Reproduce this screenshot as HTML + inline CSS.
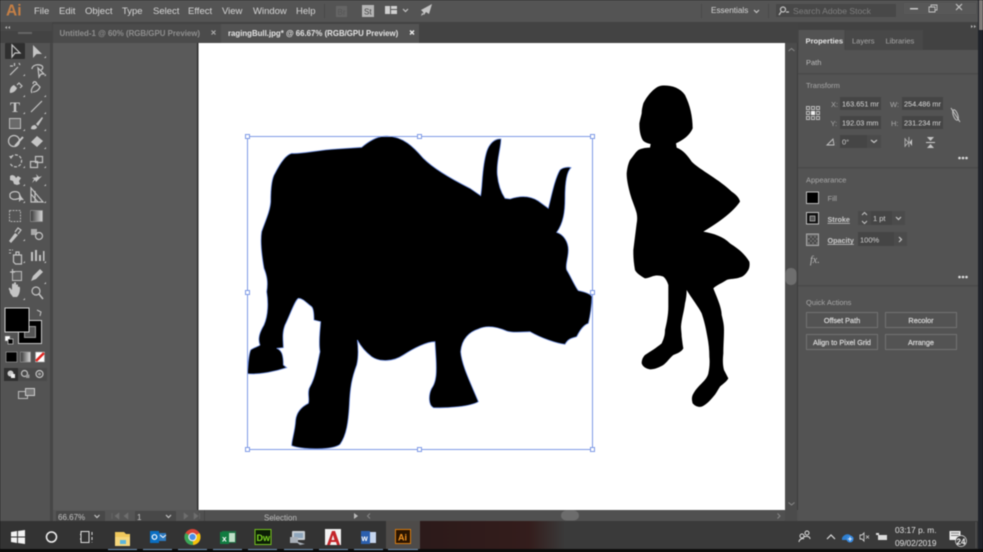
<!DOCTYPE html>
<html><head><meta charset="utf-8">
<style>
html,body{margin:0;padding:0;width:983px;height:552px;overflow:hidden;background:#111}
svg{display:block;position:absolute;left:0;top:0;filter:blur(.5px)}
text{font-family:"Liberation Sans",sans-serif;font-size:9px;fill:#d0d0d0}
.m{font-size:9.5px;fill:#d6d6d6}
.i{fill:none;stroke:#c4c4c4;stroke-width:1.2}
.f{fill:#c4c4c4}
.dim{fill:#a8a8a8}
.b{font-weight:bold}
</style></head><body>
<svg width="983" height="552" viewBox="0 0 983 552" xmlns="http://www.w3.org/2000/svg">
<defs>
<linearGradient id="tb" x1="0" x2="1" y1="0" y2="0"><stop offset="0" stop-color="#2c1a1a"/><stop offset=".75" stop-color="#341d1c"/><stop offset="1" stop-color="#3a3a3a"/></linearGradient>
<linearGradient id="gr" x1="0" x2="1" y1="0" y2="0"><stop offset="0" stop-color="#333"/><stop offset="1" stop-color="#ddd"/></linearGradient>
</defs>
<!-- base -->
<rect width="983" height="552" fill="#535353"/>
<!-- menu bar -->
<rect width="978" height="22" fill="#545454"/>
<text x="6" y="15.5" style="font-size:15.5px;font-weight:bold;fill:#c57f45">Ai</text>
<text class="m" x="34" y="14">File</text><text class="m" x="59" y="14">Edit</text><text class="m" x="85" y="14">Object</text><text class="m" x="122" y="14">Type</text><text class="m" x="153" y="14">Select</text><text class="m" x="188" y="14">Effect</text><text class="m" x="222" y="14">View</text><text class="m" x="253" y="14">Window</text><text class="m" x="296" y="14">Help</text>
<rect x="324" y="4" width="1" height="14" fill="#484848"/>
<rect x="336" y="6" width="11" height="11" fill="#656565"/><text x="337.5" y="15" style="font-size:8px;fill:#555">Br</text>
<rect x="362" y="5" width="12" height="12" fill="#b5b5b5"/><text x="364" y="14.5" style="font-size:8px;fill:#444">St</text>
<rect x="385" y="6" width="5" height="8" fill="#d0d0d0"/><rect x="391" y="6" width="6" height="3" fill="#d0d0d0"/><rect x="391" y="10" width="6" height="4" fill="#d0d0d0"/>
<path class="i" d="M403 9l2.5 2.5 2.5-2.500"/>
<path class="f" d="M421 10l11-6-3 10-3-2-2 3-1-3zM424 14l-3 2 1-3z"/>
<rect x="701" y="4" width="1" height="14" fill="#4a4a4a"/>
<text x="711" y="13" style="font-size:8.2px;fill:#d6d6d6">Essentials</text>
<path class="i" d="M754 10l2.5 2.5 2.5-2.500"/>
<rect x="768" y="4" width="1" height="14" fill="#4a4a4a"/>
<rect x="776" y="4" width="120" height="13" fill="#484848"/>
<circle cx="783" cy="9.5" r="2.500" class="i"/><path class="i" d="M781 12l-2 3M786 12h3"/>
<text x="793" y="14" style="font-size:8.6px;fill:#7e7e7e">Search Adobe Stock</text>
<rect x="904" y="3" width="72" height="11" fill="#585858"/>
<rect x="910" y="8" width="8" height="1.5" fill="#c8c8c8"/>
<path class="i" style="stroke-width:.9" d="M929 7h6v5h-6zM931 7V5h6v5h-2"/>
<path class="i" d="M956 4l6 6M962 4l-6 6"/>
<!-- desktop sliver -->
<rect x="978" y="0" width="5" height="552" fill="#1f2229"/>
<rect x="979" y="0" width="4" height="30" fill="#7f7a78"/>
<!-- tab bar -->
<rect y="22" width="978" height="21" fill="#434343"/>
<rect x="0" y="22" width="52" height="9" fill="#484848"/>
<path d="M7 26l-2 1.5 2 1.500zM10 26l-2 1.5 2 1.500z" fill="#bbb"/>
<rect x="53" y="24" width="168" height="19" fill="#4b4b4b"/>
<rect x="221" y="24" width="198" height="19" fill="#535353"/>
<text x="59.5" y="36" class="b" style="font-size:7.9px;fill:#8f8f8f">Untitled-1 @ 60% (RGB/GPU Preview)</text>
<path d="M211.5 30.5l4 4M215.5 30.5l-4 4" stroke="#aaa" stroke-width="1.2"/>
<text x="228" y="36" class="b" style="font-size:7.85px;fill:#e4e4e4">ragingBull.jpg* @ 66.67% (RGB/GPU Preview)</text>
<path d="M410 30.5l4 4M414 30.5l-4 4" stroke="#eee" stroke-width="1.3"/>
<!-- canvas -->
<rect x="50" y="43" width="3" height="478" fill="#464646"/>
<rect x="53" y="43" width="145" height="467" fill="#5a5a5a"/>
<rect x="197" y="43" width="1.5" height="467" fill="#2e2e2e"/>
<rect x="198.5" y="43" width="586.5" height="467" fill="#fff"/>
<!-- v scrollbar -->
<rect x="785" y="43" width="12" height="467" fill="#4b4b4b"/>
<rect x="785.5" y="268" width="11" height="17" rx="5" fill="#6e6e6e"/>
<path d="M788.5 51l3-2.5 3 2.500M788.5 502.5l3 2.5 3-2.500" fill="none" stroke="#888" stroke-width="1"/>
<rect x="797" y="43" width="1.5" height="478" fill="#3d3d3d"/>
<!-- bottom status -->
<rect x="53" y="510" width="745" height="11" fill="#505050"/>
<rect x="53" y="510" width="145" height="11" fill="#555"/>
<rect x="56" y="511" width="35" height="10" fill="#484848"/><text x="58" y="520" style="font-size:8px;fill:#c2c2c2">66.67%</text>
<rect x="91" y="511" width="14" height="10" fill="#484848"/><path class="i" d="M94.5 515l2.5 2.5 2.5-2.500"/>
<path d="M112 513v6M119 513l-4 3 4 3zM128 513l-4 3 4 3z" fill="#6e6e6e" stroke="#6e6e6e" stroke-width=".6"/>
<rect x="135" y="511" width="28" height="10" fill="#484848"/><text x="137" y="520" style="font-size:8px;fill:#c8c8c8">1</text>
<rect x="163" y="511" width="13" height="10" fill="#484848"/><path class="i" d="M166 515l2.5 2.5 2.5-2.500"/>
<path d="M184 513l4 3-4 3zM194 513l4 3-4 3zM199.5 513v6" fill="#6e6e6e" stroke="#6e6e6e" stroke-width=".6"/>
<rect x="204" y="510" width="1" height="11" fill="#444"/>
<text x="264" y="520.5" style="font-size:8px;fill:#bdbdbd">Selection</text>
<path d="M354 513l4 3-4 3z" fill="#bbb"/><path d="M370 513.5l-2.5 2.5 2.5 2.500" fill="none" stroke="#888"/>
<rect x="561" y="510.5" width="18" height="10" rx="5" fill="#6c6c6c"/>
<path d="M777.5 513.5l2.5 2.5-2.5 2.500" fill="none" stroke="#888"/>
<rect x="785" y="510" width="12" height="11" fill="#4b4b4b"/>
<!-- artwork: bull -->
<g transform="translate(240 125) scale(.33333)">
<path fill="#000" stroke="#6f8fe0" stroke-width="2.4" d="M365 67C385 50 410 33 440 33C490 35 520 65 550 100C585 135 650 170 690 190L722 212C728 180 725 130 740 80C748 55 765 40 783 42C783 70 768 110 772 150C775 180 785 205 795 220L810 222C840 212 870 212 895 228L925 250C935 210 945 160 960 135C968 127 985 125 993 128C980 140 975 170 975 220C975 260 970 295 950 322C970 328 985 350 985 375C985 400 975 420 980 435C990 450 1005 485 1015 497C1030 500 1050 505 1056 515C1055 540 1050 575 1045 595C1030 600 1020 615 1010 635C995 640 985 640 975 658C950 655 905 640 870 620C850 620 820 625 800 618C770 605 740 600 715 612C690 620 665 640 662 680C665 720 690 770 715 830C690 845 620 850 580 848C565 840 565 810 575 790C590 770 590 740 588 700L585 650C560 650 520 670 490 690C460 710 420 712 395 695C375 680 360 660 352 645C355 670 355 700 350 720C335 760 330 790 328 840C325 890 320 930 300 958C280 975 190 975 155 962C155 945 165 920 167 885C170 860 185 845 205 835C210 825 200 800 210 785C225 760 232 720 240 680C235 650 240 620 242 590L222 585C222 565 220 550 215 545C200 535 190 520 175 520C165 525 150 570 135 600C125 625 130 650 130 668L110 670C125 675 130 690 130 720L140 728C110 738 60 750 22 746C25 720 25 690 32 675C40 668 55 665 60 660C52 640 60 620 72 600C85 570 85 530 80 500C85 470 80 450 72 430C65 390 60 350 65 320C75 290 90 260 92 230C92 190 95 160 105 145C115 125 135 90 155 85C185 88 230 75 290 72C320 70 350 68 365 67Z"/>
</g>
<rect x="247.5" y="136.5" width="345" height="313" fill="none" stroke="#7e9ae6" stroke-width="1"/>
<g fill="#fff" stroke="#7e9ae6" stroke-width="1">
<rect x="245.5" y="134.5" width="4" height="4"/><rect x="417.5" y="134.5" width="4" height="4"/><rect x="590.5" y="134.5" width="4" height="4"/>
<rect x="245.5" y="290.5" width="4" height="4"/><rect x="590.5" y="290.5" width="4" height="4"/>
<rect x="245.5" y="447.5" width="4" height="4"/><rect x="417.5" y="447.5" width="4" height="4"/><rect x="590.5" y="447.5" width="4" height="4"/>
</g>
<!-- artwork: girl -->
<g transform="translate(620 80) scale(.33333)">
<path fill="#000" d="M125 17C150 15 180 22 195 45C210 75 218 110 218 145C210 165 190 180 168 190L170 203C190 210 205 230 215 245C240 270 300 300 335 335C350 345 358 355 360 365C340 395 300 425 250 455C280 460 310 470 330 490C345 500 370 515 388 545C390 555 388 565 385 570C378 582 370 590 360 592C345 598 330 595 320 600C305 610 290 615 280 625L290 650C298 670 305 690 305 705C310 725 312 735 312 750C312 775 310 795 310 820C308 840 308 855 312 870L325 895C320 905 308 912 300 920C292 932 288 942 280 950C270 962 258 975 245 980C235 982 225 978 218 970C215 960 215 952 218 945C225 930 235 920 245 910C255 900 262 892 265 880C268 865 270 850 268 830C268 810 266 790 262 770C258 745 252 720 245 700C235 680 215 655 200 630C200 645 198 658 195 670C192 695 185 715 183 740C183 750 185 760 185 770C187 785 188 795 190 805C185 815 172 820 160 825C148 835 140 848 130 855C118 862 105 868 90 868C78 866 68 860 65 850C65 838 70 830 75 825C90 815 110 803 125 790C132 775 135 765 135 750C140 730 145 705 145 680L145 615C142 605 137 596 130 590C118 585 108 586 100 588C90 592 82 595 75 595C62 588 50 580 45 570C42 553 40 535 40 520L40 510L50 430C52 420 52 410 50 400C45 380 35 360 30 340C25 320 20 300 20 280C22 262 25 250 30 240C40 228 45 218 55 210C68 204 80 203 90 203L92 192C82 190 72 186 68 180C60 165 58 148 58 130C60 118 63 110 65 100C65 88 68 78 70 70C78 55 85 45 95 35C105 25 115 18 125 17Z"/>
</g>
<!-- toolbar -->
<rect x="1" y="31" width="49" height="1" fill="#444"/>
<rect x="18" y="32" width="14" height="2" fill="#666"/>
<rect x="5" y="43" width="20" height="16" rx="1" fill="#2f2f2f"/>
<g class="tools">
<path class="i" d="M12 45l0 12 3-4h5z"/>
<path class="f" d="M33 45v13l3.5-4H42z"/>
<path class="i" d="M10 75l8-8M14.5 63v3M10 66h3M19 63l1 2"/>
<path class="i" d="M32 69c0-3 4-5 8-4s3 4 1 5M38 68l1 9 2-3 3 0z"/>
<path class="f" d="M10 93c-1-3 1-7 4-8l3 3c-1 3-4 5-7 5z"/>
<path class="i" d="M17 85l2-2 3 3-2 2"/>
<path class="i" d="M32 93c-2-3 1-8 5-9l3 3c-1 3-4 5-7 5M37 84c-1-3-4-3-4 0"/>
<text x="10" y="112" style="font-family:'Liberation Serif',serif;font-size:15px;font-weight:bold;fill:#c8c8c8">T</text>
<path class="i" d="M31 112l11-11"/>
<rect x="9.5" y="118.5" width="11" height="10" fill="#6a6a6a" stroke="#bdbdbd"/>
<path class="f" d="M31 129c0-3 2-4 4-4l2 2c0 2-3 3-6 2zM36 124l6-7 1 1-5 8z"/>
<circle cx="14" cy="141" r="5.5" class="i"/><path d="M15 146l8-9" stroke="#c8c8c8" stroke-width="2"/>
<path class="f" d="M31 142l6-6 6 5-6 6z"/>
<path class="i" stroke-dasharray="3 1.5" d="M11 157a6 6 0 1 1-1 6"/><path class="f" d="M9 156h4l-2 3z"/>
<rect x="30.5" y="161.5" width="7" height="6" class="i"/><rect x="35.5" y="156.5" width="7" height="6" class="i"/>
<path class="f" d="M10 176c3-2 5 0 6 2l2-2 3 2-2 3 1 3-3 1-3-1-1-3-3-1z"/>
<path class="f" d="M36 174l3 3 3-1-6 6-1-2-3 3 2-4-2-1 5-1z"/>
<path class="i" d="M10 194c2-3 7-3 9-1l2 5-4 1c-3 1-6 0-7-2z"/><path class="f" d="M19 194v8l2-2 3 0z"/>
<path class="i" d="M31 188l0 14h12zM31 194l7 8M35 191v11"/>
<rect x="9.5" y="210.5" width="11" height="11" fill="#555" stroke="#b0b0b0" stroke-dasharray="2 1"/>
<rect x="30.5" y="210.5" width="12" height="11" fill="url(#gr)" stroke="#999" stroke-width=".6"/>
<path class="f" d="M9 241l6-8 3 2-7 8z"/><path class="i" d="M15 232l3-4 3 2-3 4"/>
<rect x="31" y="229" width="6" height="6" fill="#aaa"/><circle cx="39" cy="236" r="3.5" class="i"/>
<path class="i" d="M13.5 255h8v9h-6l-2-2zM16 252h3v3h-3z"/><path d="M9 250h2M9 253h2M12 250h1" stroke="#bbb"/>
<path class="f" d="M31 261v-9h2v9zM35 261v-11h2v11zM39 261v-6h2v6zM43 261v-10h1.5v10z"/>
<rect x="12.5" y="271.5" width="9" height="9" fill="#606060" stroke="#bbb"/><path class="i" d="M10 272h5M12.5 269v5"/>
<path class="f" d="M31 281l2-5 7-7 3 3-7 7z"/>
<path class="f" d="M10 293c0-3-2-4-1-5s2 1 3 2v-5c0-2 2-2 2 0v-2c0-1 2-1 2 0v2c1-1 2-1 2 1v1c1-1 2 0 2 1 0 4-1 7-3 9h-4z"/>
<circle cx="36" cy="291" r="4" class="i"/><path d="M39 294l4 5" stroke="#c4c4c4" stroke-width="1.5"/>
<!-- small corner triangles -->
<g fill="#c4c4c4">
<path d="M46 58v-2l-2 2zM25 76v-2l-2 2zM46 76v-2l-2 2zM25 97v-2l-2 2zM46 97v-2l-2 2zM25 114v-2l-2 2zM46 114v-2l-2 2zM25 131v-2l-2 2zM46 131v-2l-2 2zM25 149v-2l-2 2zM46 149v-2l-2 2zM25 168v-2l-2 2zM46 168v-2l-2 2zM25 186v-2l-2 2zM46 186v-2l-2 2zM25 203v-2l-2 2zM46 203v-2l-2 2zM25 241v-2l-2 2zM25 263v-2l-2 2zM46 263v-2l-2 2zM46 284v-2l-2 2zM25 300v-2l-2 2z"/>
</g>
</g>
<!-- swatches -->
<rect x="18.5" y="320.5" width="23" height="23" fill="#000" stroke="#c8c8c8"/>
<rect x="24.5" y="326.5" width="11" height="11" fill="#555" stroke="#999"/>
<rect x="5" y="308" width="24" height="24" fill="#000" stroke="#d0d0d0"/>
<path class="i" d="M37 310l4 2-1 4M36 310v0" style="stroke-width:1"/>
<rect x="5" y="336" width="5" height="5" fill="#fff" stroke="#777" stroke-width=".5"/><rect x="8" y="339" width="5" height="5" fill="#000" stroke="#ccc" stroke-width=".7"/>
<rect x="6" y="352" width="11" height="10" fill="#000" stroke="#aaa" stroke-width=".6"/>
<rect x="20.5" y="352" width="10" height="10" fill="url(#gr)" stroke="#999" stroke-width=".6"/>
<rect x="35.5" y="352" width="9" height="10" fill="#fff" stroke="#999" stroke-width=".6"/><path d="M36 361l8-8" stroke="#e0241f" stroke-width="2.5"/>
<rect x="4" y="368" width="14" height="13" fill="#2f2f2f"/>
<rect x="18" y="368" width="29" height="13" fill="#4a4a4a"/>
<circle cx="10.5" cy="373.5" r="3" fill="#ccc"/><rect x="11" y="374" width="4" height="4" fill="#eee"/>
<circle cx="24.5" cy="373.5" r="3" class="i"/><rect x="26" y="374.5" width="3.5" height="3.5" fill="#999"/>
<circle cx="39.5" cy="374" r="3.5" class="i"/><circle cx="39.5" cy="374" r="1.5" fill="#999"/>
<rect x="18.5" y="391.5" width="9" height="7" fill="#555" stroke="#bbb"/><rect x="25.5" y="388.5" width="9" height="7" fill="#777" stroke="#ccc"/>
<!-- right panel -->
<rect x="798" y="22" width="180" height="8" fill="#424242"/>
<path d="M971 25l2 1.5-2 1.500zM974 25l2 1.5-2 1.500z" fill="#bbb"/>
<rect x="798" y="30" width="180" height="20" fill="#424242"/>
<rect x="798.5" y="30" width="46" height="20" fill="#535353"/>
<rect x="845" y="30" width="78" height="20" fill="#484848"/>
<rect x="798" y="50" width="180" height="471" fill="#535353"/>
<text x="805.5" y="43.5" class="b" style="font-size:7.6px;fill:#e6e6e6">Properties</text>
<text x="852" y="43.5" class="dim" style="font-size:7.5px">Layers</text>
<text x="885.5" y="43.5" class="dim" style="font-size:7.5px">Libraries</text>
<text x="806" y="65" class="dim" style="font-size:7.5px;fill:#bbb">Path</text>
<rect x="798" y="73" width="180" height="1.5" fill="#4a4a4a"/>
<text x="806" y="88" class="dim" style="font-size:7.5px">Transform</text>
<g fill="none" stroke="#c8c8c8" stroke-width=".9">
<rect x="806.5" y="106.5" width="3" height="3"/><rect x="811.5" y="106.5" width="3" height="3"/><rect x="816.5" y="106.5" width="3" height="3"/>
<rect x="806.5" y="111.5" width="3" height="3"/><rect x="816.5" y="111.5" width="3" height="3"/>
<rect x="806.5" y="116.5" width="3" height="3"/><rect x="811.5" y="116.5" width="3" height="3"/><rect x="816.5" y="116.5" width="3" height="3"/>
</g><rect x="811" y="111" width="4" height="4" fill="#eee"/>
<text x="831" y="107" class="dim" style="font-size:7.5px">X:</text>
<rect x="840" y="97" width="41" height="13" fill="#454545"/><text x="842" y="106.5" style="font-size:7.3px;fill:#dcdcdc">163.651 mr</text>
<text x="830.5" y="126" class="dim" style="font-size:7.5px">Y:</text>
<rect x="840" y="116" width="41" height="13" fill="#454545"/><text x="842" y="125.5" style="font-size:7.3px;fill:#dcdcdc">192.03 mm</text>
<text x="890" y="107" class="dim" style="font-size:7.5px">W:</text>
<rect x="902" y="97" width="41" height="13" fill="#454545"/><text x="904" y="106.5" style="font-size:7.3px;fill:#dcdcdc">254.486 mr</text>
<text x="891" y="126" class="dim" style="font-size:7.5px">H:</text>
<rect x="902" y="116" width="41" height="13" fill="#454545"/><text x="904" y="125.5" style="font-size:7.3px;fill:#dcdcdc">231.234 mr</text>
<path d="M951 108l9 14" stroke="#c4c4c4" stroke-width="1"/><ellipse cx="955.5" cy="115" rx="2.2" ry="5.5" class="i" style="stroke-width:1" transform="rotate(-20 955.5 115)"/>
<path class="i" style="stroke-width:.9" d="M827 145h7l-1-6zM836 142.5v.1M836 145v.1"/>
<rect x="840" y="135" width="27" height="13" fill="#454545"/><text x="842" y="144.5" style="font-size:7.5px;fill:#d2d2d2">0°</text>
<rect x="867" y="135" width="14" height="13" fill="#4b4b4b"/><path class="i" d="M871 140l3 2.5 3-2.500"/>
<path d="M905 138v9M905 139l3.5 3.5-3.5 3.500z" fill="none" stroke="#bbb" stroke-width=".8"/><path d="M912 139l-2.5 3.5 2.5 3.500z" fill="#ccc"/><rect x="908.5" y="137" width=".8" height="10" fill="#bbb"/>
<path class="f" d="M927 137h7l-3.5 4zM927 148h7l-3.5-4z"/><rect x="926" y="142" width="9" height="1" fill="#ccc"/>
<circle cx="959.5" cy="158" r="1.3" fill="#ddd"/><circle cx="963" cy="158" r="1.3" fill="#ddd"/><circle cx="966.5" cy="158" r="1.3" fill="#ddd"/>
<rect x="798" y="167" width="180" height="1.5" fill="#4a4a4a"/>
<text x="806" y="182.5" class="dim" style="font-size:7.5px">Appearance</text>
<rect x="806.5" y="192" width="12" height="11.5" fill="#000" stroke="#bdbdbd"/>
<text x="827.5" y="201" class="dim" style="font-size:7.5px">Fill</text>
<rect x="806.5" y="212.5" width="12" height="11.5" fill="#111" stroke="#bdbdbd"/><rect x="810" y="216" width="5" height="5" fill="#555" stroke="#bbb" stroke-width=".7"/>
<text x="827.5" y="222" style="font-size:7.2px;font-weight:bold;fill:#ccc;text-decoration:underline">Stroke</text>
<rect x="858" y="211" width="13" height="14" fill="#4a4a4a"/>
<path class="i" d="M862 215l2.5-2.5 2.5 2.500M862 221l2.5 2.5 2.5-2.500" style="stroke-width:1"/>
<rect x="871" y="211" width="21" height="14" fill="#454545"/><text x="873" y="221" style="font-size:7.5px;fill:#d2d2d2">1 pt</text>
<rect x="892" y="211" width="13" height="14" fill="#4b4b4b"/><path class="i" d="M896 217l2.5 2.5 2.5-2.500"/>
<rect x="806.5" y="234" width="12" height="11.5" fill="#6b6b6b" stroke="#aaa"/>
<path d="M808 236h2v2h-2zM812 236h2v2h-2zM816 236h1.5v2H816zM810 238h2v2h-2zM814 238h2v2h-2zM808 240h2v2h-2zM812 240h2v2h-2zM816 240h1.5v2H816zM810 242h2v2h-2zM814 242h2v2h-2z" fill="#444"/>
<text x="827.5" y="243" style="font-size:7.2px;font-weight:bold;fill:#ccc;text-decoration:underline">Opacity</text>
<rect x="858" y="232" width="36" height="14" fill="#454545"/><text x="860" y="242.5" style="font-size:7.5px;fill:#d2d2d2">100%</text>
<rect x="894" y="232" width="13" height="14" fill="#4b4b4b"/><path class="i" d="M899 237l2.5 2.5-2.5 2.500"/>
<text x="810" y="263" style="font-family:'Liberation Serif',serif;font-style:italic;font-size:10px;fill:#bbb">fx.</text>
<circle cx="959.5" cy="277" r="1.3" fill="#ddd"/><circle cx="963" cy="277" r="1.3" fill="#ddd"/><circle cx="966.5" cy="277" r="1.3" fill="#ddd"/>
<rect x="798" y="285" width="180" height="1.5" fill="#4a4a4a"/>
<text x="806" y="305" class="dim" style="font-size:7.5px">Quick Actions</text>
<g fill="#535353" stroke="#727272">
<rect x="806.5" y="312.5" width="71" height="15"/><rect x="885.5" y="312.5" width="71" height="15"/>
<rect x="806.5" y="334.5" width="71" height="15"/><rect x="885.5" y="334.5" width="71" height="15"/>
</g>
<text x="842" y="323" text-anchor="middle" style="font-size:7.3px;fill:#e0e0e0;stroke:#e0e0e0;stroke-width:.15">Offset Path</text>
<text x="921" y="323" text-anchor="middle" style="font-size:7.3px;fill:#e0e0e0;stroke:#e0e0e0;stroke-width:.15">Recolor</text>
<text x="842" y="345" text-anchor="middle" style="font-size:7.3px;fill:#e0e0e0;stroke:#e0e0e0;stroke-width:.15">Align to Pixel Grid</text>
<text x="921" y="345" text-anchor="middle" style="font-size:7.3px;fill:#e0e0e0;stroke:#e0e0e0;stroke-width:.15">Arrange</text>
<!-- taskbar -->
<rect x="0" y="521" width="978" height="28" fill="#333333"/>
<rect x="420" y="521" width="145" height="28" fill="url(#tb)"/>
<rect x="565" y="521" width="413" height="28" fill="#3a3a3a"/>
<rect x="0" y="549" width="983" height="3" fill="#0b0b0b"/>
<rect x="386" y="521" width="34" height="28" fill="#4e4b49"/>
<!-- underlines -->
<g fill="#6f94b8">
<rect x="108" y="549" width="29" height="1"/><rect x="143" y="549" width="29" height="1"/><rect x="178" y="549" width="29" height="1"/><rect x="213" y="549" width="29" height="1"/><rect x="248" y="549" width="29" height="1"/><rect x="284" y="549" width="29" height="1"/><rect x="319" y="549" width="29" height="1"/><rect x="354" y="549" width="29" height="1"/><rect x="388" y="549" width="30" height="1"/>
</g>
<!-- windows -->
<path d="M11 532l6-1v5.5h-6zM18 531l7-1v6.5h-7zM11 537.5h6v5.5l-6-1zM18 537.5h7v6.5l-7-1z" fill="#f2f2f2"/>
<circle cx="51.5" cy="537" r="5" fill="none" stroke="#f2f2f2" stroke-width="1.5"/>
<path d="M81 531.5h8v11h-8zM80 534.5h1M80 539h1M92 532v3M92 537v3M92 542v.5" fill="none" stroke="#ddd" stroke-width="1"/>
<!-- explorer -->
<path d="M115 532h9l2 2h4v12h-15z" fill="#f0c85c"/><rect x="115" y="537" width="15" height="9" fill="#f6d77c"/><rect x="120" y="540" width="6" height="4" fill="#5bb5dc"/>
<!-- outlook -->
<rect x="156" y="533" width="10" height="8" fill="#2d7ac0"/><rect x="150" y="531" width="9" height="12" fill="#0a6ec2"/>
<circle cx="154.5" cy="537" r="2.3" fill="none" stroke="#fff" stroke-width="1.2"/><path d="M160 535l3 2.5 3-2.500" stroke="#fff" fill="none"/>
<!-- chrome -->
<circle cx="192.5" cy="537" r="8" fill="#db4437"/>
<path d="M192.5 537L199.5 533A8 8 0 0 1 193 545z" fill="#f4c20d"/>
<path d="M192.5 537L193 545A8 8 0 0 1 185.5 533z" fill="#3aa757"/>
<circle cx="192.5" cy="537" r="3.7" fill="#4a8ee8" stroke="#eee" stroke-width="1.2"/>
<!-- excel -->
<rect x="222" y="531" width="14" height="12" fill="#1d6f42"/><rect x="229" y="533" width="6" height="9" fill="#bfe0c8"/><rect x="220" y="532" width="9" height="12" fill="#107c41"/>
<text x="222" y="541.5" class="b" style="font-size:8.5px;fill:#fff">x</text>
<!-- dw -->
<rect x="255" y="529.5" width="16" height="15" fill="#0c1e06" stroke="#74c11f"/>
<text x="256.5" y="541" class="b" style="font-size:9px;fill:#7bd321">Dw</text>
<!-- computer -->
<rect x="292" y="531" width="13" height="9" rx="1" fill="#c8ced4"/><rect x="294" y="533" width="9" height="5" fill="#8ea6bc"/><path d="M290 537h8v6h-8zM295 541l10 3-5 1z" fill="#a9b0b8"/>
<!-- autocad -->
<rect x="325" y="529" width="16" height="16" fill="#f3f3f3"/>
<path d="M327 545l5-14h3l5 14h-3l-1-3h-5l-1 3zM331.5 540h3l-1.5-5z" fill="#c4252a" fill-rule="evenodd"/>
<!-- word -->
<rect x="366" y="532" width="10" height="11" fill="#c6d6ee"/><rect x="361" y="531" width="9" height="13" fill="#2b5fae"/>
<text x="361.5" y="541" class="b" style="font-size:8px;fill:#fff">w</text>
<!-- ai -->
<rect x="395.5" y="529.5" width="15" height="14" fill="#2a1400" stroke="#d67a10"/>
<text x="398" y="540.5" class="b" style="font-size:9px;fill:#f29420">Ai</text>
<!-- tray -->
<circle cx="802" cy="536" r="2" fill="none" stroke="#ddd"/><circle cx="807" cy="533" r="2" fill="none" stroke="#ddd"/><path d="M799 542c0-3 4-4 5-3M804 537c2-1 6-1 6 2" fill="none" stroke="#ddd"/>
<path d="M827 539l4-4 4 4" fill="none" stroke="#ddd" stroke-width="1.2"/>
<path d="M842 538c2-4 7-5 9-2l3 2-3 2h-9z" fill="#2f7fd0"/><circle cx="850" cy="539" r="3.5" fill="#3a8be0"/><path d="M848 539h4M850 537v4" stroke="#fff" stroke-width=".8"/>
<path d="M860 535h2l2-2v8l-2-2h-2z" fill="none" stroke="#ccc" stroke-width=".9"/><path d="M866 535.5l3 3M869 535.5l-3 3" stroke="#ccc" stroke-width=".8"/>
<rect x="878" y="535" width="9" height="5" fill="#ddd"/><rect x="876" y="533" width="3" height="2" fill="#ddd"/>
<text x="895" y="533" style="font-size:8.3px;fill:#e2e2e2">03:17 p. m.</text>
<text x="895" y="546" style="font-size:8.3px;fill:#e2e2e2">09/02/2019</text>
<rect x="949.5" y="531" width="11" height="9" fill="#eee"/><path d="M951 533h8M951 535.5h8" stroke="#555" stroke-width=".8"/>
<circle cx="961" cy="541" r="5.5" fill="#3a3a3a" stroke="#ddd" stroke-width=".7"/><text x="956.5" y="544.5" class="b" style="font-size:8px;fill:#eee">24</text>
<rect x="975.5" y="522" width="1" height="26" fill="#555"/>
</svg>
</body></html>
